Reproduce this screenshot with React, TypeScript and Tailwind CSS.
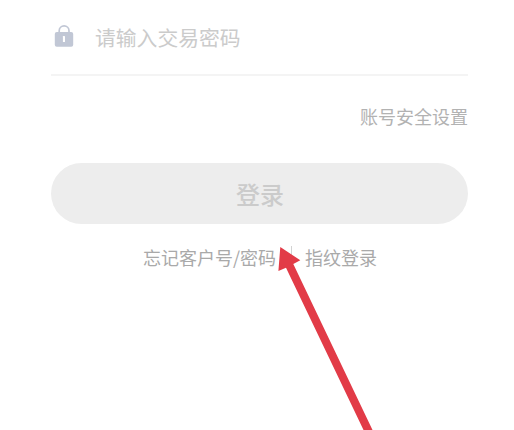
import React, { useState } from 'react';

const LockIcon = () => (
  <svg width="20" height="24" viewBox="0 0 20 24" fill="none" className="shrink-0 mb-[2px]">
    <path d="M5.2 9V6.8a4.9 4.9 0 0 1 9.8 0V9" stroke="#c1c7d5" strokeWidth="1.7" />
    <rect x="0.8" y="8" width="18.4" height="14.8" rx="2" fill="#c1c7d5" />
    <rect x="8.9" y="12" width="2.1" height="5.9" rx="0.5" fill="#fff" />
  </svg>
);

const Arrow = () => (
  <svg
    width="514"
    height="430"
    viewBox="0 0 514 430"
    className="absolute inset-0 pointer-events-none"
  >
    <path
      d="M280.3 247L300.3 260.3L293.3 264L373 431H364L286 267.7L278.4 271Z"
      fill="#e23b47"
    />
  </svg>
);

export default function App() {
  const [password, setPassword] = useState('');

  return (
    <div className="relative w-[514px] h-[430px] overflow-hidden bg-white font-['Noto_Sans_CJK_SC',sans-serif]">
      <form
        className="ml-[51px] w-[417px] flex flex-col"
        onSubmit={(e) => e.preventDefault()}
      >
        <div className="flex items-center h-[76px] pl-[3px] border-b-2 border-[#f4f4f4]">
          <LockIcon />
          <input
            type="password"
            placeholder="请输入交易密码"
            value={password}
            onChange={(e) => setPassword(e.target.value)}
            className="ml-[21px] flex-1 min-w-0 text-[20.8px] leading-8 outline-none placeholder:text-[#cbcbcb]"
          />
        </div>

        <button type="button" className="self-end mt-[26px] text-lg leading-7 text-[#b2b2b2]">
          账号安全设置
        </button>

        <button
          type="submit"
          className="mt-[33px] h-[61px] pl-px rounded-full bg-[#ededed] text-2xl font-medium text-[#cbcbcb]"
        >
          登录
        </button>

        <div className="mt-[19px] flex items-center pl-[92px] text-lg leading-7 text-[#a9a9a9]">
          <button type="button">忘记客户号/密码</button>
          <span className="ml-[15px] mr-[13px] mb-1 w-px h-[18px] bg-[#d2d2d2]" />
          <button type="button">指纹登录</button>
        </div>
      </form>

      {/* Panah penunjuk ke tombol login */}
      <Arrow />
    </div>
  );
}
